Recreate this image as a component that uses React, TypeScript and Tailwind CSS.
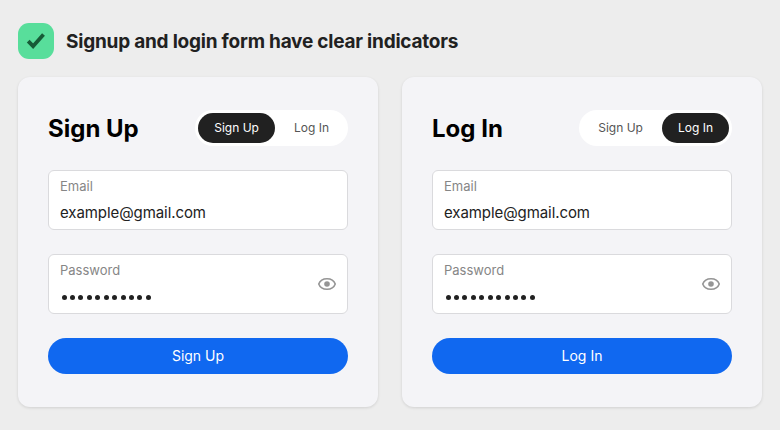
import { useState } from "react";

type Mode = "signup" | "login";

const labels: Record<Mode, string> = {
  signup: "Sign Up",
  login: "Log In",
};

const modes: Mode[] = ["signup", "login"];

function EyeIcon() {
  return (
    <svg width="20" height="20" viewBox="0 0 20 20" fill="none">
      <path
        d="M1.75 10C3 6.6 6.2 4.75 10 4.75S17 6.6 18.25 10C17 13.4 13.8 15.25 10 15.25S3 13.4 1.75 10Z"
        stroke="#959595"
        strokeWidth="1.6"
        strokeLinejoin="round"
      />
      <circle cx="10" cy="10" r="2.8" fill="#959595" />
    </svg>
  );
}

function AuthCard({ initialMode }: { initialMode: Mode }) {
  const [mode, setMode] = useState<Mode>(initialMode);

  return (
    <div className="w-[360px] h-[330px] rounded-xl bg-[#f4f4f7] px-[30px] pt-[33px] shadow-[0_1px_3px_rgba(0,0,0,0.12)]">
      {/* Title and mode switch */}
      <div className="flex items-center justify-between h-9 mb-6">
        <h2 className="pt-0.5 text-2xl leading-9 font-bold text-black">
          {labels[mode]}
        </h2>
        <div className="flex gap-[3px] h-9 p-[3px] rounded-full bg-white">
          {modes.map((item) => (
            <button
              key={item}
              onClick={() => setMode(item)}
              className={`px-4 rounded-full text-xs ${
                item === mode ? "bg-[#212121] text-white" : "text-[#555555]"
              }`}
            >
              {labels[item]}
            </button>
          ))}
        </div>
      </div>

      {/* Fields */}
      <div className="h-[60px] mb-6 px-[11px] pt-1.5 rounded-md border border-[#dadadd] bg-white">
        <div className="text-[13px] leading-[18px] text-[#868686]">Email</div>
        <div className="mt-2 text-[15px] leading-5 tracking-[-0.08px] text-[#212121]">
          example@gmail.com
        </div>
      </div>
      <div className="flex items-center justify-between h-[60px] mb-6 pl-[11px] pr-2.5 rounded-md border border-[#dadadd] bg-white">
        <div className="self-start pt-1.5">
          <div className="text-[13px] leading-[18px] text-[#868686]">
            Password
          </div>
          <div className="flex gap-[3.45px] mt-4 pl-[1.5px]">
            {Array.from({ length: 11 }, (_, i) => (
              <span key={i} className="size-[5px] rounded-full bg-[#212121]" />
            ))}
          </div>
        </div>
        <button>
          <EyeIcon />
        </button>
      </div>

      <button className="w-full h-9 rounded-full bg-[#1068f0] text-sm text-white">
        {labels[mode]}
      </button>
    </div>
  );
}

export default function App() {
  return (
    <div className="w-[780px] h-[430px] px-[18px] pt-[23px] bg-[#ededed] font-['Inter',sans-serif]">
      <div className="flex items-center gap-3 h-9 mb-[18px]">
        <div className="flex items-center justify-center size-9 rounded-[11px] bg-[#58de9b]">
          <svg width="20" height="20" viewBox="0 0 20 20" fill="none">
            <path
              d="M2.2 10.2L7.1 15.2L17.5 3.6"
              stroke="#175b37"
              strokeWidth="3.8"
            />
          </svg>
        </div>
        <h1 className="pt-0.5 text-[19px] font-bold tracking-[-0.22px] text-[#212121] whitespace-nowrap">
          Signup and login form have clear indicators
        </h1>
      </div>

      <div className="flex gap-6">
        <AuthCard initialMode="signup" />
        <AuthCard initialMode="login" />
      </div>
    </div>
  );
}
